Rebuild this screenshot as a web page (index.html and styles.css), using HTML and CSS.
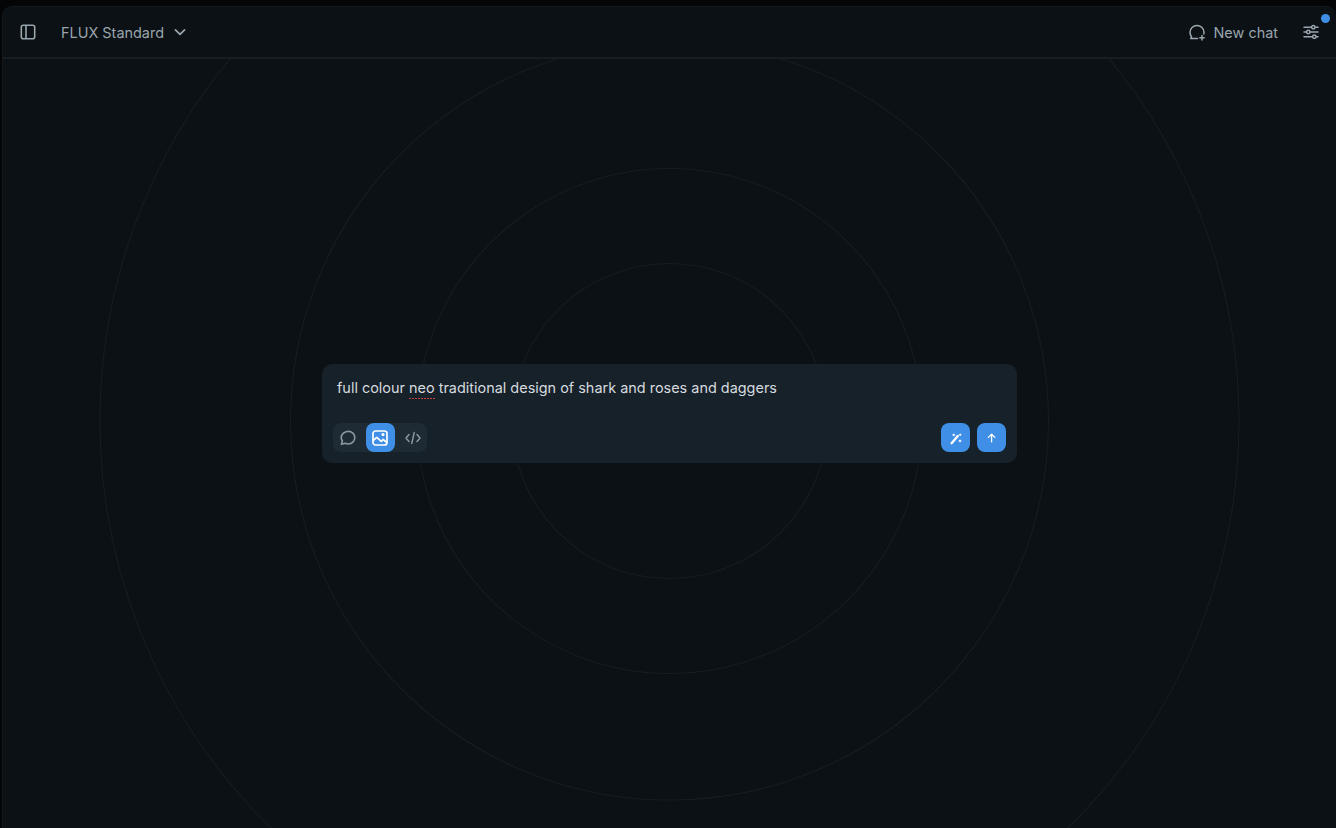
FILE: index.html
```html
<!DOCTYPE html>
<html lang="en">
<head>
  <meta charset="UTF-8" />
  <title>FLUX Standard</title>
  <link rel="stylesheet" href="styles.css">
</head>
<body>

<div class="app">
  <!-- Top bar -->
  <header class="topbar">
    <button class="icon-btn sidebar-btn" aria-label="Toggle sidebar">
      <svg width="18" height="18" viewBox="0 0 18 18" fill="none" stroke="currentColor" stroke-width="1.6"><rect x="2.3" y="2.3" width="13.4" height="13.4" rx="2"/><path d="M7 2.3v13.4"/></svg>
    </button>
    <button class="model-btn">
      <span>FLUX Standard</span>
      <svg width="16" height="16" viewBox="0 0 16 16" fill="none" stroke="currentColor" stroke-width="1.7" stroke-linecap="round" stroke-linejoin="round"><path d="M3.4 5.8 8 10.4l4.6-4.6"/></svg>
    </button>
    <div class="topbar-right">
      <button class="new-chat">
        <svg width="18" height="18" viewBox="0 0 18 18" fill="none" stroke="currentColor" stroke-width="1.5" stroke-linecap="round" stroke-linejoin="round"><path d="M9.5 15.6H2.6l1-1.7A6.9 6.9 0 0 1 2 9.3C2 5.4 5.1 2.6 9 2.6s7 2.8 7 6.7c0 .6-.1 1.2-.2 1.7"/><path d="M14 12.6v4.4M11.8 14.8h4.4"/></svg>
        <span>New chat</span>
      </button>
      <button class="icon-btn settings-btn" aria-label="Settings">
        <svg width="16" height="16" viewBox="0 0 16 16" fill="none" stroke="currentColor" stroke-width="1.5" stroke-linecap="round"><path d="M1 3.2h7.6M12 3.2h3M1 8h2.6M7 8h8M1 12.8h8.6M13 12.8h2"/><circle cx="10.3" cy="3.2" r="1.7"/><circle cx="5.3" cy="8" r="1.7"/><circle cx="11.3" cy="12.8" r="1.7"/></svg>
        <span class="dot"></span>
      </button>
    </div>
  </header>

  <!-- Chat area -->
  <main class="stage">
    <svg class="rings" width="1334" height="770" viewBox="0 0 1334 770" fill="none" stroke="#161d23" stroke-width="1.1">
      <circle cx="666.5" cy="362" r="157.5"/>
      <circle cx="666.5" cy="362" r="252.5"/>
      <circle cx="666.5" cy="362" r="379"/>
      <circle cx="666.5" cy="362" r="569.5"/>
    </svg>

    <form class="composer">
      <p class="prompt">full colour <span class="typo">neo</span> traditional design of shark and roses and daggers</p>
      <div class="composer-row">
        <div class="modes">
          <button type="button" class="mode" aria-label="Chat">
            <svg width="18" height="18" viewBox="0 0 18 18" fill="none" stroke="currentColor" stroke-width="1.6" stroke-linejoin="round"><path d="M9.2 2.2c3.7 0 6.6 2.9 6.6 6.4S12.9 15 9.2 15c-1.1 0-2.1-.2-3-.7l-3.8.9 1-3.3a6.2 6.2 0 0 1-1.2-3.3c0-3.5 3.2-6.4 8-6.4z"/></svg>
          </button>
          <button type="button" class="mode active" aria-label="Image">
            <svg width="18" height="18" viewBox="0 0 18 18" fill="none" stroke="currentColor" stroke-width="1.7" stroke-linejoin="round"><rect x="2" y="2" width="14" height="14" rx="2.5"/><path d="m2.2 11.5 3.6-3.2 4.4 4 2-1.8 3.6 3"/><circle cx="12" cy="5.6" r=".8" fill="currentColor"/></svg>
          </button>
          <button type="button" class="mode" aria-label="Code">
            <svg width="18" height="18" viewBox="0 0 18 18" fill="none" stroke="currentColor" stroke-width="1.5" stroke-linecap="round" stroke-linejoin="round"><path d="M5 5.6 2 9l3 3.4M13 5.6 16 9l-3 3.4M10.2 3.6 7.8 14.4"/></svg>
          </button>
        </div>
        <div class="actions">
          <button type="button" class="action" aria-label="Enhance">
            <svg width="14" height="14" viewBox="0 0 14 14" fill="none" stroke="currentColor" stroke-linecap="round"><path d="M2.6 12.2 8.8 5" stroke-width="2.4"/><path d="M4.8 3v1.8M3.9 3.9h1.8M11 9v1.8M10.1 9.9h1.8M11.2 3v1.4M10.5 3.7h1.4" stroke-width="1.1"/></svg>
          </button>
          <button type="button" class="action" aria-label="Send">
            <svg width="12" height="12" viewBox="0 0 12 12" fill="none" stroke="currentColor" stroke-width="1.3" stroke-linecap="round" stroke-linejoin="round"><path d="M5.6 9.8V2.4M2.4 5.4l3.2-3.2 3.2 3.2"/></svg>
          </button>
        </div>
      </div>
    </form>
  </main>
</div>

</body>
</html>
```

FILE: styles.css
```css
* {
  box-sizing: border-box;
}
html, body {
  height: 100%;
}
body {
  margin: 0;
  background: #030507;
  font-family: 'Inter', sans-serif;
  overflow: hidden;
}
button {
  background: none;
  border: none;
  padding: 0;
  font: inherit;
  color: inherit;
  cursor: pointer;
}

.app {
  height: 100%;
  margin: 6px 0 0 2px;
  display: flex;
  flex-direction: column;
  background: #0b1115;
  border-top: 1px solid #12191e;
  border-left: 1px solid #12191e;
  border-radius: 10px 10px 0 0;
  overflow: hidden;
}

.topbar {
  height: 52px;
  flex: none;
  display: flex;
  align-items: center;
  padding: 0 17px 0 16px;
  border-bottom: 2px solid #161e23;
  color: #9aa5ad;
}
.icon-btn {
  display: flex;
  align-items: center;
  justify-content: center;
}
.sidebar-btn {
  width: 18px;
  height: 18px;
}
.model-btn {
  display: flex;
  align-items: center;
  gap: 8px;
  margin-left: 24px;
  font-size: 14.45px;
}
.topbar-right {
  margin-left: auto;
  display: flex;
  align-items: center;
  gap: 25px;
}
.new-chat {
  display: flex;
  align-items: center;
  gap: 7px;
  font-size: 14.45px;
}
.settings-btn {
  position: relative;
  width: 16px;
  height: 16px;
}
.dot {
  position: absolute;
  top: -10.5px;
  right: -10.5px;
  width: 9px;
  height: 9px;
  border-radius: 50%;
  background: #3f8fe6;
}

.stage {
  flex: 1;
  position: relative;
  display: flex;
  align-items: center;
  justify-content: center;
  padding-bottom: 67px;
}
.rings {
  position: absolute;
  top: 0;
  left: 0;
}

.composer {
  position: relative;
  width: 695px;
  height: 99px;
  padding: 14px 11px 11px 11px;
  display: flex;
  flex-direction: column;
  justify-content: space-between;
  background: #17212a;
  border-radius: 10px;
}
.prompt {
  margin: 0;
  padding-left: 4px;
  font-size: 14.45px;
  line-height: 20px;
  color: #d5dadf;
}
.typo {
  padding-bottom: 3px;
  background: repeating-linear-gradient(90deg, #c8423c 0 2px, transparent 2px 3px) left bottom / 100% 1px no-repeat;
}
.composer-row {
  display: flex;
  align-items: center;
  justify-content: space-between;
}
.modes {
  display: flex;
  background: #1e2a34;
  border-radius: 8px;
  height: 29px;
}
.mode {
  width: 29px;
  height: 29px;
  margin-right: 3.5px;
  padding-top: 1px;
  display: flex;
  align-items: center;
  justify-content: center;
  border-radius: 8px;
  color: #8d99a2;
}
.mode:first-child {
  padding-left: 1px;
}
.mode:last-child {
  margin-right: 0;
}
.mode.active {
  background: #3f8fe6;
  color: #fff;
}
.actions {
  display: flex;
  gap: 7px;
}
.action {
  width: 29px;
  height: 29px;
  padding-top: 1px;
  display: flex;
  align-items: center;
  justify-content: center;
  background: #3f8fe6;
  border-radius: 8px;
  color: #fff;
}
```
